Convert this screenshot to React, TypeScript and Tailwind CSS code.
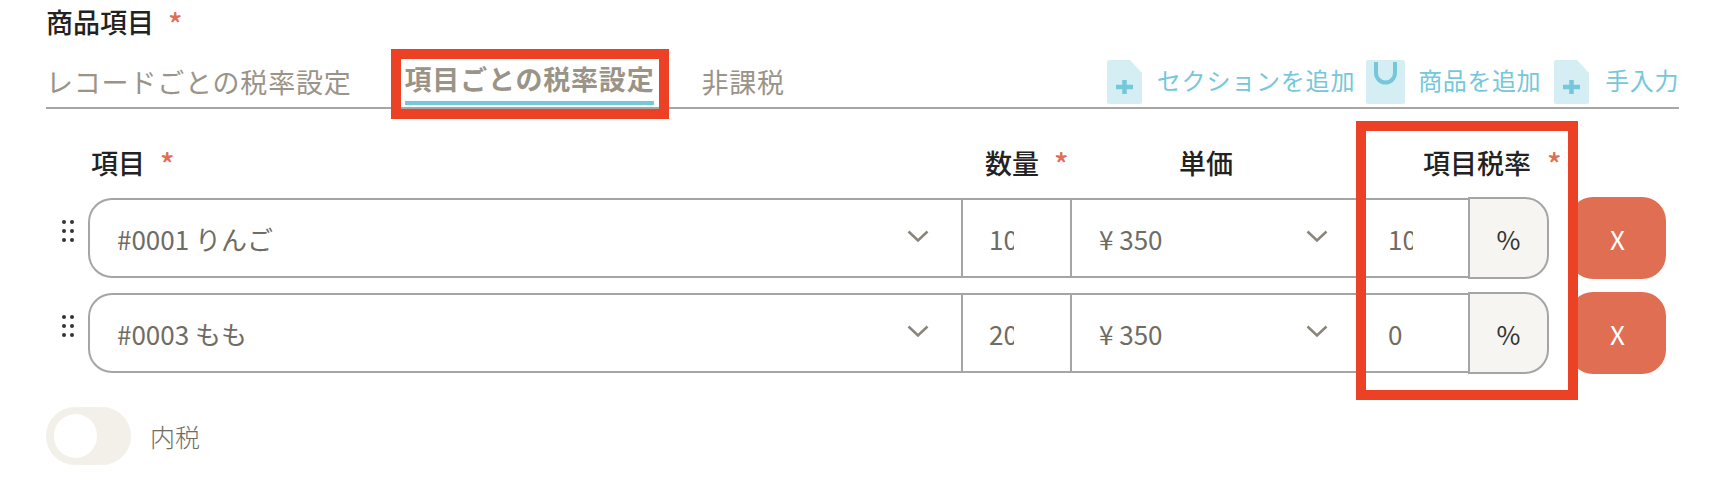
import React from 'react';

const FONT = '[font-family:"Noto_Sans_CJK_JP","Noto_Sans",sans-serif]';

function Star() {
  return <span className="text-[#e06e52] text-[30px] leading-none font-medium">*</span>;
}

function FilePlus() {
  return (
    <svg width="35" height="44" viewBox="0 0 35 44" className="shrink-0">
      <path d="M2 0H23L35 13V42a2 2 0 0 1-2 2H2a2 2 0 0 1-2-2V2a2 2 0 0 1 2-2z" fill="#d4eef4" />
      <path d="M17.500 20v14M9 27h17" stroke="#74c8da" strokeWidth="4.500" />
    </svg>
  );
}

function BoxU() {
  return (
    <svg width="39" height="44" viewBox="0 0 39 44" className="shrink-0">
      <rect width="39" height="44" rx="2" fill="#d4eef4" />
      <path d="M10 2v11a9.500 9.500 0 0 0 19 0V2" fill="none" stroke="#74c8da" strokeWidth="4" />
    </svg>
  );
}

function Chevron() {
  return (
    <svg width="22" height="12" viewBox="0 0 22 12" className="shrink-0">
      <path d="M1.500 1.500L11 10.500L20.500 1.500" fill="none" stroke="#8a857b" strokeWidth="2.500" />
    </svg>
  );
}

function Grip() {
  return (
    <div className="grid grid-cols-2 gap-x-[4px] gap-y-[5px] w-[12px]">
      {[0, 1, 2, 3, 4, 5].map((i) => (
        <span key={i} className="w-[4px] h-[4px] rounded-full bg-[#333]" />
      ))}
    </div>
  );
}

function Row({ name, qty, rate }: { name: string; qty: string; rate: string }) {
  return (
    <div className="flex items-center h-[82px]">
      <div className="w-[42px] shrink-0 flex justify-start pl-[16px] pb-[14px]">
        <Grip />
      </div>
      <div className="flex h-[80px] border-y-2 border-l-2 border-[#a5a5a5] rounded-l-[24px] text-[#6f6c64] text-[26px]">
        <div className="w-[871px] flex items-center justify-between pl-[27px] pr-[32px]">
          <span>{name}</span>
          <span className="pb-[4px]"><Chevron /></span>
        </div>
        <div className="w-[109px] flex items-center pl-[26px] border-l-2 border-[#a5a5a5]">
          <input readOnly value={qty} className="w-[25px] outline-none bg-transparent" />
        </div>
        <div className="w-[290px] flex items-center justify-between pl-[27px] pr-[32px] border-l-2 border-[#a5a5a5]">
          <span className="whitespace-nowrap">¥ 350</span>
          <span className="pb-[4px]"><Chevron /></span>
        </div>
        <div className="w-[108px] flex items-center pl-[28px]">
          <input readOnly value={rate} className="w-[25px] outline-none bg-transparent" />
        </div>
      </div>
      <div className="w-[81px] h-[82px] shrink-0 flex items-center justify-center bg-[#f6f5f2] border-2 border-[#a5a5a5] rounded-r-[24px] text-[#333] text-[26px]">
        %
      </div>
      <button className="ml-[20px] w-[97px] h-[82px] shrink-0 bg-[#e06e52] rounded-[24px] text-white text-[26px]">
        X
      </button>
    </div>
  );
}

export default function App() {
  return (
    <div className={`relative w-[1722px] h-[492px] overflow-hidden bg-white ${FONT}`}>
      <div className="w-[1679px] pl-[46px] pt-[3px]">
        <div className="flex items-start gap-[14px] h-[46px] text-[#222]">
          <span className="text-[27px] leading-[38px] font-medium">商品項目</span>
          <span className="pt-[5px]"><Star /></span>
        </div>

        <div className="flex items-stretch h-[60px] border-b-2 border-[#a5a5a5]">
          <div className="flex text-[27px] tracking-[0.800px] text-[#9a9488]">
            <div className="flex items-center pt-[8px] whitespace-nowrap">レコードごとの税率設定</div>
            <div className="ml-[53px] flex items-center pt-[8px] whitespace-nowrap font-bold border-b-[4px] border-[#74c8da] mb-[2px]">項目ごとの税率設定</div>
            <div className="ml-[47px] flex items-center pt-[8px] whitespace-nowrap">非課税</div>
          </div>
          <div className="ml-auto flex items-start pt-[11px] text-[24px] tracking-[0.600px] text-[#74c8da] whitespace-nowrap">
            <FilePlus />
            <span className="ml-[15px] leading-[40px] tracking-[0.800px]">セクションを追加</span>
            <span className="ml-[11px]"><BoxU /></span>
            <span className="ml-[13px] leading-[40px]">商品を追加</span>
            <span className="ml-[13px]"><FilePlus /></span>
            <span className="ml-[16px] leading-[40px]">手入力</span>
          </div>
        </div>

        <div className="flex items-center h-[88px] text-[27px] font-medium text-[#222] pt-[20px]">
          <div className="w-[939px] pl-[45px] flex items-center gap-[15px]">
            <span>項目</span>
            <Star />
          </div>
          <div className="w-[194px] flex items-center gap-[15px]">
            <span>数量</span>
            <Star />
          </div>
          <div className="w-[244px]">単価</div>
          <div className="flex items-center gap-[16px]">
            <span>項目税率</span>
            <Star />
          </div>
        </div>

        <div className="flex flex-col gap-[13px]">
          <Row name="#0001 りんご" qty="10" rate="10" />
          <Row name="#0003 もも" qty="20" rate="0" />
        </div>

        <div className="flex items-center gap-[19px] mt-[33px]">
          <div className="w-[85px] h-[58px] flex items-center pl-[8px] rounded-full bg-[#f3efe9]">
            <span className="w-[43px] h-[44px] rounded-full bg-white" />
          </div>
          <span className="text-[25px] text-[#6f6c64] font-light pt-[2px]">内税</span>
        </div>
      </div>

      {/* 注釈の赤枠 */}
      <div className="absolute left-[391px] top-[49px] w-[278px] h-[70px] border-[10px] border-[#ec4124]" />
      <div className="absolute left-[1356px] top-[121px] w-[222px] h-[279px] border-[10px] border-[#ec4124]" />
    </div>
  );
}
